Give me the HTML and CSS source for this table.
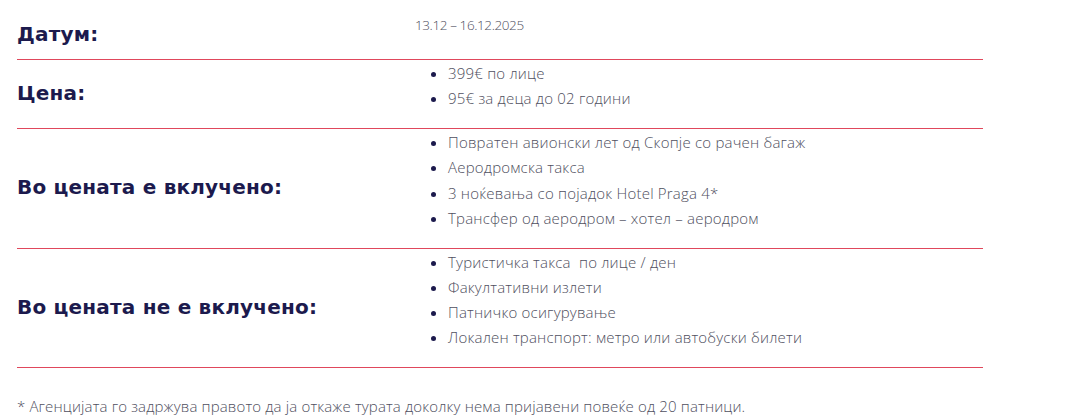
FILE: index.html
```html
<!DOCTYPE html>
<html lang="mk">
<head>
<meta charset="utf-8">
<title>Детали</title>
<link rel="stylesheet" href="styles.css">
</head>
<body>
<div class="details">
  <div class="row row-first">
    <h3 class="label">Датум:</h3>
    <div class="value"><p class="date">13.12 – 16.12.2025</p></div>
  </div>
  <div class="row">
    <h3 class="label">Цена:</h3>
    <div class="value">
      <ul>
        <li>399€ по лице</li>
        <li>95€ за деца до 02 години</li>
      </ul>
    </div>
  </div>
  <div class="row">
    <h3 class="label">Во цената е вклучено:</h3>
    <div class="value">
      <ul>
        <li>Повратен авионски лет од Скопје со рачен багаж</li>
        <li>Аеродромска такса</li>
        <li>3 ноќевања со појадок Hotel Praga 4*</li>
        <li>Трансфер од аеродром – хотел – аеродром</li>
      </ul>
    </div>
  </div>
  <div class="row">
    <h3 class="label">Во цената не е вклучено:</h3>
    <div class="value">
      <ul>
        <li>Туристичка такса&nbsp; по лице / ден</li>
        <li>Факултативни излети</li>
        <li>Патничко осигурување</li>
        <li>Локален транспорт: метро или автобуски билети</li>
      </ul>
    </div>
  </div>
  <p class="note">* Агенцијата го задржува правото да ја откаже турата доколку нема пријавени повеќе од 20 патници.</p>
</div>
</body>
</html>
```

FILE: styles.css
```css
html, body {
  margin: 0;
  padding: 0;
  background: #ffffff;
}
body {
  font-family: "Open Sans", "Noto Sans", sans-serif;
  color: #4f4f60;
}
.details {
  width: 966px;
  padding: 0 0 0 17px;
}
.row {
  display: grid;
  grid-template-columns: 398px 1fr;
  align-items: center;
  border-bottom: 1px solid #e0485c;
}
.row-first {
  padding-top: 10px;
}
.label {
  margin: 0;
  padding-bottom: 2px;
  font-family: "DejaVu Sans", "Open Sans", sans-serif;
  font-size: 20px;
  font-weight: 700;
  color: #1c1a4d;
  line-height: 26px;
  letter-spacing: 0.2px;
}
.value {
  align-self: start;
  padding-top: 1px;
}
.date {
  margin: 4px 0 24px;
  font-size: 13.5px;
  font-weight: 300;
  line-height: 20px;
  letter-spacing: -0.4px;
}
ul {
  margin: 0 0 16.4px;
  padding-left: 33px;
}
li {
  font-size: 15px;
  font-weight: 300;
  line-height: 25.3px;
  letter-spacing: 0.2px;
}
li::marker {
  color: #1c1a4d;
}
.note {
  margin: 28px 0 0;
  font-size: 15px;
  font-weight: 300;
  line-height: 20px;
  letter-spacing: 0.15px;
}
```
